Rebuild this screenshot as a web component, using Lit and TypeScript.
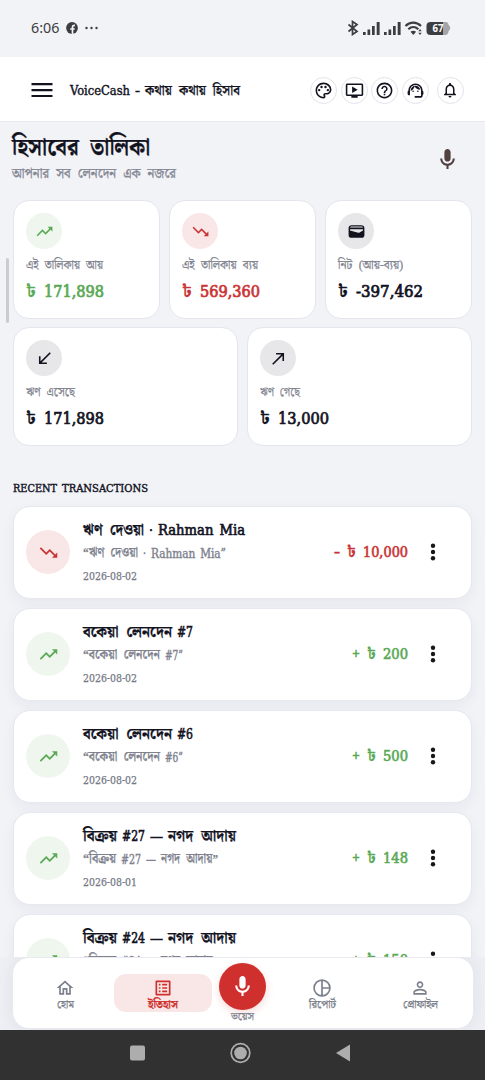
import { LitElement, html, css, svg } from "lit";
import { customElement, property } from "lit/decorators.js";
import { classMap } from "lit/directives/class-map.js";

const ICONS: Record<string, unknown> = {
  menu: svg`<path d="M3 6h18v1.900H3zM3 11.100h18v1.900H3zM3 16.200h18v1.900H3z"/>`,
  up: svg`<path d="M16 6l2.29 2.29-4.88 4.88-4-4L2 16.59 3.41 18l6-6 4 4 6.3-6.29L22 12V6z"/>`,
  down: svg`<path d="M16 18l2.29-2.29-4.88-4.88-4 4L2 7.41 3.41 6l6 6 4-4 6.3 6.29L22 12v6z"/>`,
  received: svg`<path d="M20 5.41L18.59 4 7 15.59V9H5v10h10v-2H8.41z"/>`,
  made: svg`<path d="M9 5v2h6.59L4 18.59 5.41 20 17 8.41V15h2V5z"/>`,
  wallet: svg`<path fill-rule="evenodd" d="M6 4h12a4 4 0 0 1 4 4v8a4 4 0 0 1-4 4H6a4 4 0 0 1-4-4V8a4 4 0 0 1 4-4zM6 5.600c-1.300 0-2.200.600-2.200 1.400h16.400c0-.800-.900-1.400-2.200-1.400zM3.800 9v1.600l10.400 3c.6.2 1.200 0 1.700-.3l4.300-2.700V9z"/>`,
  mic: svg`<path d="M12 14c1.66 0 3-1.34 3-3V5c0-1.660-1.340-3-3-3S9 3.340 9 5v6c0 1.660 1.340 3 3 3zm5-3c0 2.760-2.240 5-5 5s-5-2.240-5-5H5c0 3.530 2.610 6.430 6 6.920V21h2v-3.080c3.390-.490 6-3.390 6-6.920z"/>`,
  palette: svg`<path d="M12 22C6.490 22 2 17.510 2 12S6.490 2 12 2s10 4.040 10 9c0 3.310-2.690 6-6 6h-1.770c-.280 0-.5.220-.5.5 0 .120.050.230.130.330.410.470.640 1.060.640 1.670A2.500 2.500 0 0 1 12 22zm0-18c-4.410 0-8 3.590-8 8s3.590 8 8 8c.280 0 .5-.220.5-.5a.540.540 0 0 0-.140-.350c-.410-.460-.630-1.050-.630-1.650a2.500 2.500 0 0 1 2.500-2.500H16c2.210 0 4-1.790 4-4 0-3.860-3.590-7-8-7z"/><circle cx="6.5" cy="11.5" r="1.5"/><circle cx="9.5" cy="7.5" r="1.5"/><circle cx="14.5" cy="7.5" r="1.5"/><circle cx="17.5" cy="11.5" r="1.5"/>`,
  video: svg`<path d="M21 3H3c-1.110 0-2 .890-2 2v12c0 1.100.890 2 2 2h5v2h8v-2h5c1.100 0 2-.900 2-2V5c0-1.110-.900-2-2-2zm0 14H3V5h18v12zm-5-6l-7 4V7z"/>`,
  help: svg`<path d="M11 18h2v-2h-2v2zm1-16C6.480 2 2 6.480 2 12s4.480 10 10 10 10-4.480 10-10S17.520 2 12 2zm0 18c-4.410 0-8-3.590-8-8s3.590-8 8-8 8 3.590 8 8-3.590 8-8 8zm0-14c-2.210 0-4 1.790-4 4h2c0-1.100.900-2 2-2s2 .900 2 2c0 2-3 1.750-3 5h2c0-2.250 3-2.500 3-5 0-2.210-1.790-4-4-4z"/>`,
  agent: svg`<path d="M21 12.220C21 6.730 16.740 3 12 3c-4.690 0-9 3.650-9 9.280-.600.340-1 .980-1 1.720v2c0 1.100.900 2 2 2h1v-6.100c0-3.870 3.130-7 7-7s7 3.130 7 7V19h-8v2h8c1.100 0 2-.900 2-2v-1.220c.590-.310 1-.920 1-1.640v-2.300c0-.700-.410-1.310-1-1.620z"/><circle cx="9" cy="13" r="1"/><circle cx="15" cy="13" r="1"/><path d="M18 11.030C17.520 8.180 15.040 6 12.050 6c-3.030 0-6.290 2.510-6.030 6.450 2.470-1.010 4.330-3.210 4.860-5.890 1.310 2.630 4 4.440 7.120 4.470z"/>`,
  bell: svg`<path d="M12 22c1.100 0 2-.900 2-2h-4c0 1.100.900 2 2 2zm6-6v-5c0-3.070-1.630-5.640-4.500-6.320V4c0-.830-.670-1.500-1.500-1.500s-1.500.670-1.500 1.500v.680C7.640 5.360 6 7.920 6 11v5l-2 2v1h16v-1l-2-2zm-2 1H8v-6c0-2.480 1.510-4.500 4-4.500s4 2.020 4 4.500v6z"/>`,
  dots: svg`<circle cx="12" cy="5.700" r="2.200"/><circle cx="12" cy="12" r="2.200"/><circle cx="12" cy="18.300" r="2.200"/>`,
  home: svg`<path d="M12 5.690l5 4.500V18h-2v-6H9v6H7v-7.810l5-4.500M12 3L2 12h3v8h6v-6h2v6h6v-8h3L12 3z"/>`,
  list: svg`<path d="M19 5v14H5V5h14m1.100-2H3.900c-.500 0-.900.400-.900.900v16.200c0 .400.400.900.900.900h16.200c.400 0 .900-.500.900-.900V3.900c0-.500-.500-.900-.900-.900zM11 7h6v2h-6V7zm0 4h6v2h-6v-2zm0 4h6v2h-6zM7 7h2v2H7zm0 4h2v2H7zm0 4h2v2H7z"/>`,
  pie: svg`<path fill="none" stroke="currentColor" stroke-width="2" d="M12 2.500a9.500 9.500 0 1 0 0 19a9.500 9.500 0 1 0 0-19zM12 2.500v19M12 12h9.500"/>`,
  person: svg`<path d="M12 5.900a2.100 2.100 0 1 1 0 4.200 2.100 2.100 0 0 1 0-4.200m0 9c2.970 0 6.100 1.460 6.100 2.100v1.100H5.900V17c0-.640 3.130-2.100 6.100-2.100M12 4C9.790 4 8 5.790 8 8s1.790 4 4 4 4-1.790 4-4-1.790-4-4-4zm0 9c-2.670 0-8 1.340-8 4v3h16v-3c0-2.660-5.330-4-8-4z"/>`,
};

@customElement("ui-icon")
class UiIcon extends LitElement {
  @property() name = "";
  static styles = css`
    :host { display: block; width: 20px; height: 20px; flex: none; }
    svg { display: block; width: 100%; height: 100%; fill: currentColor; }
  `;
  render() {
    return html`<svg viewBox="0 0 24 24">${ICONS[this.name]}</svg>`;
  }
}

/** One line of text condensed or widened to an exact measure. */
@customElement("fit-text")
class FitText extends LitElement {
  @property({ type: Number }) w = 0;
  @property() text = "";
  static styles = css`
    :host { display: block; white-space: nowrap; flex: none; }
    span { display: inline-block; transform-origin: 0 50%; white-space: pre; word-spacing: 0.300em; -webkit-text-stroke: 0.250px currentColor; }
    .latin {
      font-family: "DejaVu Serif Condensed", "DejaVu Serif", serif; font-stretch: condensed;
      font-size: 0.890em; font-weight: 400; word-spacing: 0.120em; vertical-align: top; padding-top: var(--latin-drop, 0);
      -webkit-text-stroke: var(--latin-stroke, 0.400px) currentColor;
    }
    .sign { font-size: 0.700em; }
  `;
  render() {
    const latin = !/[\u0980-\u09ff]/.test(this.text);
    return html`<span class=${classMap({ latin, sign: this.text === "+" })}>${this.text}</span>`;
  }
  updated() {
    const span = this.renderRoot.querySelector("span") as HTMLElement;
    span.style.transform = "";
    const natural = span.getBoundingClientRect().width;
    this.style.width = `${this.w}px`;
    if (natural > 0) span.style.transform = `scaleX(${this.w / natural})`;
  }
}

const t = (text: string, w: number, cls = "") =>
  html`<fit-text class=${cls} .text=${text} .w=${w}></fit-text>`;

interface Stat { icon: string; tone: string; label: string; lw: number; value: string; vw: number; }
const STATS_TOP: Stat[] = [
  { icon: "up", tone: "green", label: "এই তালিকায় আয়", lw: 77, value: "171,898", vw: 60 },
  { icon: "down", tone: "red", label: "এই তালিকায় ব্যয়", lw: 76, value: "569,360", vw: 60 },
  { icon: "wallet", tone: "ink", label: "নিট (আয়-ব্যয়)", lw: 65, value: "-397,462", vw: 67 },
];
const STATS_BOTTOM: Stat[] = [
  { icon: "received", tone: "ink", label: "ঋণ এসেছে", lw: 49, value: "171,898", vw: 60 },
  { icon: "made", tone: "ink", label: "ঋণ গেছে", lw: 40, value: "13,000", vw: 51 },
];

interface Tx { up: boolean; title: [string, number][]; note: [string, number][]; date: string; amount: string; aw: number; }
const TXS: Tx[] = [
  { up: false, title: [["ঋণ দেওয়া", 61], ["·", 4], ["Rahman Mia", 87]], note: [["“ঋণ দেওয়া", 55], ["·", 3], ["Rahman Mia”", 75]], date: "2026-08-02", amount: "10,000", aw: 45 },
  { up: true, title: [["বকেয়া লেনদেন", 89], ["#7", 16]], note: [["“বকেয়া লেনদেন", 77], ["#7”", 18]], date: "2026-08-02", amount: "200", aw: 25 },
  { up: true, title: [["বকেয়া লেনদেন", 89], ["#6", 16]], note: [["“বকেয়া লেনদেন", 77], ["#6”", 18]], date: "2026-08-02", amount: "500", aw: 25 },
  { up: true, title: [["বিক্রয়", 34], ["#27", 23], ["—", 13], ["নগদ আদায়", 68]], note: [["“বিক্রয়", 33], ["#27", 20], ["—", 10], ["নগদ আদায়”", 57]], date: "2026-08-01", amount: "148", aw: 25 },
  { up: true, title: [["বিক্রয়", 34], ["#24", 23], ["—", 13], ["নগদ আদায়", 68]], note: [["“বিক্রয়", 33], ["#24", 20], ["—", 10], ["নগদ আদায়”", 57]], date: "2026-08-01", amount: "150", aw: 25 },
];

@customElement("app-root")
class AppRoot extends LitElement {
  static styles = css`
    * { box-sizing: border-box; }
    :host {
      display: flex; flex-direction: column; width: 485px; height: 1080px; overflow: hidden;
      background: #f2f3f7; color: #12131f;
      font-family: "Liberation Serif", "Noto Serif Bengali", "Noto Sans Bengali", serif;
    }
    .status { height: 57px; flex: none; display: flex; align-items: center; padding: 0 33px 1px 31px; color: #3c3d40; }
    .clock { font: 14.300px/20px "Noto Sans", sans-serif; margin-right: 7px; }
    .status svg { display: block; flex: none; }
    .sys { margin-left: auto; }
    .bar { height: 65px; flex: none; background: #fff; border-bottom: 1px solid #e8e9ee; display: flex; align-items: center; padding: 2px 21.500px 0 28px; }
    .menu { width: 28px; height: 28px; }
    .brand { display: flex; gap: 5px; margin-left: 14px; font-size: 14px; line-height: 20px; font-weight: 600; padding-top: 1px; }
    .tools { display: flex; gap: 3.500px; margin-left: auto; }
    .tool { width: 27px; height: 27px; border: 1px solid #e2e3ea; border-radius: 50%; display: grid; place-items: center; }
    .tool ui-icon { width: 19px; height: 19px; }
    .tool.last { margin-left: 4.500px; }
    .tool.last ui-icon { width: 18px; height: 18px; }
    .main { height: 835px; flex: none; overflow: hidden; position: relative; padding: 0 13px; }
    .thumb { position: absolute; left: 6px; top: 136px; width: 3px; height: 65px; border-radius: 2px; background: #cbccd1; }
    .head { display: flex; justify-content: space-between; height: 78px; padding-top: 9px; margin-left: -1px; }
    .h1 { font-size: 24px; line-height: 33px; font-weight: 700; }
    .sub { font-size: 14px; line-height: 20px; color: #858895; font-weight: 500; }
    .head ui-icon { width: 25px; height: 25px; color: #51423f; margin: 16px 12px 0 0; }
    .grid { display: grid; gap: 9px; }
    .three { grid-template-columns: repeat(3, 1fr); margin-bottom: 8px; }
    .two { grid-template-columns: repeat(2, 1fr); }
    .card { height: 119px; border: 1px solid #e4e5ee; border-radius: 16px; background: #fff; padding: 12px; }
    .disc { width: 36px; height: 36px; border-radius: 50%; display: grid; place-items: center; }
    .disc ui-icon { width: 19px; height: 19px; }
    .disc.green { background: #eef6ee; color: #5aa955; }
    .disc.red { background: #f9e7e8; color: #cb3434; }
    .disc.ink { background: #e7e7e9; }
    .label { font-size: 12px; line-height: 18px; color: #80838f; margin-top: 7px; }
    .value { --latin-stroke: 0.700px; --latin-drop: 1px; display: flex; gap: 8px; font-size: 18px; line-height: 24px; font-weight: 700; margin-top: 5px; }
    .value.green, .amount.green { color: #5aa955; }
    .value.red, .amount.red { color: #cb3434; }
    .recent { --latin-drop: 1px; font-size: 12.500px; line-height: 18px; font-weight: 600; height: 18px; margin: 33px 0 9px; display: flex; gap: 5px; }
    .list { display: flex; flex-direction: column; gap: 9px; }
    .tx { height: 93px; border: 1px solid #e6e7ef; border-radius: 17px; background: #fff; box-shadow: 0 5px 14px rgba(40, 42, 80, 0.05); display: flex; align-items: center; padding: 0 26px 1px 12px; }
    .tx .disc { width: 44px; height: 44px; flex: none; }
    .tx .disc ui-icon { width: 21px; height: 21px; }
    .body { margin-left: 13px; }
    .line { display: flex; gap: 5px; }
    .title { --latin-stroke: 0.600px; font-size: 16px; line-height: 24px; height: 24px; font-weight: 700; margin-top: -1px; }
    .note { --latin-drop: 1px; font-size: 13.500px; line-height: 22px; height: 23px; color: #80838f; font-weight: 600; gap: 5px; }
    .date { --latin-stroke: 0.250px; font-size: 12px; line-height: 18px; color: #757986; margin-top: 3px; }
    .amount { --latin-stroke: 0.600px; margin-left: auto; display: flex; gap: 7px; font-size: 16px; line-height: 22px; font-weight: 700; }
    .more { width: 24px; height: 24px; margin-left: 13px; color: #17171b; }
    .dock { height: 73px; flex: none; padding: 0 11px 1px 12px; background: #eeeff4; }
    .nav { height: 72px; background: #fff; border: 1px solid #e8e9f1; border-radius: 17px; display: flex; align-items: center; padding: 0 3px; box-shadow: 0 0 16px rgba(40, 42, 80, 0.07); }
    .tab { width: 98px; height: 38px; border-radius: 12px; display: flex; flex-direction: column; align-items: center; justify-content: center; color: #7c7f8c; font-size: 11px; line-height: 13px; font-weight: 500; }
    .tab ui-icon { width: 20px; height: 20px; margin-top: 2px; }
    .tab.on { background: #f9e7e7; color: #cf302e; font-weight: 700; }
    .voice { width: 61px; height: 66px; display: flex; flex-direction: column; align-items: center; font-size: 11px; line-height: 14px; color: #7c7f8c; }
    .fab { width: 47px; height: 47px; border-radius: 50%; background: #cf302e; color: #fff; display: grid; place-items: center; box-shadow: 0 3px 8px rgba(207, 48, 46, 0.18); margin: 3px 0 -1px; flex: none; }
    .fab ui-icon { width: 25px; height: 25px; }
    .keys { height: 50px; flex: none; background: #313132; display: flex; justify-content: center; align-items: center; padding: 0 4px 4px 0; }
  `;

  private stat(s: Stat) {
    return html`<div class="card">
      <div class="disc ${s.tone}"><ui-icon name=${s.icon}></ui-icon></div>
      <div class="label">${t(s.label, s.lw)}</div>
      <div class="value ${s.tone}">${t("৳", 10)}${t(s.value, s.vw)}</div>
    </div>`;
  }

  private tx(x: Tx) {
    const tone = classMap({ green: x.up, red: !x.up, amount: true });
    return html`<div class="tx">
      <div class="disc ${x.up ? "green" : "red"}"><ui-icon name=${x.up ? "up" : "down"}></ui-icon></div>
      <div class="body">
        <div class="line title">${x.title.map(([s, w]) => t(s, w))}</div>
        <div class="line note">${x.note.map(([s, w]) => t(s, w))}</div>
        <div class="date">${t(x.date, 54)}</div>
      </div>
      <div class=${tone}>${t(x.up ? "+" : "-", x.up ? 8 : 6)}${t("৳", 9)}${t(x.amount, x.aw)}</div>
      <ui-icon class="more" name="dots"></ui-icon>
    </div>`;
  }

  private tab(icon: string, label: string, w: number, on = false) {
    return html`<div class=${classMap({ tab: true, on })}><ui-icon name=${icon}></ui-icon>${t(label, w)}</div>`;
  }

  render() {
    return html`
      <div class="status">
        <span class="clock">6:06</span>
        <svg width="34" height="14" viewBox="0 0 34 14" fill="#3c3d40">
          <circle cx="6" cy="7" r="5.900"/>
          <path fill="none" stroke="#f2f3f7" stroke-width="1.700" d="M6.500 13V6.200C6.500 4.800 7.200 4.300 9 4.400M4.200 8h4.500"/>
          <circle cx="20.500" cy="7" r="1.200"/><circle cx="25.500" cy="7" r="1.200"/><circle cx="30.500" cy="7" r="1.200"/>
        </svg>
        <svg class="sys" width="106" height="16" viewBox="0 0 106 16" fill="#3c3d40">
          <path fill="none" stroke="#3c3d40" stroke-width="1.700" d="M2.500 4.500l8.500 7-4.500 3V1.500L11 4.500l-8.500 7"/>
          <path d="M17 12h2.700v3H17zM21.500 9.500h2.700V15h-2.700zM26 6h2.700v9H26zM30.700 2h2.900v13h-2.900zM38 12h2.700v3H38zM42.500 9.500h2.700V15h-2.700zM47 6h2.700v9H47zM51.700 2h2.900v13h-2.900z"/>
          <path fill="none" stroke="#3c3d40" stroke-width="2.200" d="M59.500 6c4.500-4.500 11-4.500 15.500 0M62.300 9.300c3-2.800 7-2.800 10 0"/>
          <path d="M64.500 11.800c1.800-1.400 3.800-1.400 5.600 0L67.300 15zM74 9l1.700 2.300h-3.400zM74 15l1.700-2.300h-3.400z"/>
          <path fill="#a4a5a8" d="M93 2h6c3 0 3.500 1.500 3.700 3.300 2 1 2 4.400 0 5.400-.2 2.500-1.200 4.300-3.700 4.300h-6z"/>
          <path d="M84.500 2H97v13H84.500a4 4 0 0 1-4-4V6a4 4 0 0 1 4-4z"/>
          <text x="86.500" y="12.300" font-family="Noto Sans" font-size="10" font-weight="700" fill="#fff" textLength="11" lengthAdjust="spacingAndGlyphs">67</text>
        </svg>
      </div>
      <div class="bar">
        <ui-icon class="menu" name="menu"></ui-icon>
        <div class="brand">${t("VoiceCash", 60)}${t("-", 5)}${t("কথায় কথায় হিসাব", 95)}</div>
        <div class="tools">
          ${["palette", "video", "help", "agent", "bell"].map(
            (n) => html`<div class=${classMap({ tool: true, last: n === "bell" })}><ui-icon name=${n}></ui-icon></div>`
          )}
        </div>
      </div>
      <div class="main">
        <div class="thumb"></div>
        <div class="head">
          <div>
            ${t("হিসাবের তালিকা", 138, "h1")}
            ${t("আপনার সব লেনদেন এক নজরে", 164, "sub")}
          </div>
          <ui-icon name="mic"></ui-icon>
        </div>
        <div class="grid three">${STATS_TOP.map((s) => this.stat(s))}</div>
        <div class="grid two">${STATS_BOTTOM.map((s) => this.stat(s))}</div>
        <div class="recent">${t("RECENT", 44)}${t("TRANSACTIONS", 86)}</div>
        <div class="list">${TXS.map((x) => this.tx(x))}</div>
      </div>
      <div class="dock">
        <div class="nav">
          ${this.tab("home", "হোম", 17)}
          ${this.tab("list", "ইতিহাস", 30, true)}
          <div class="voice"><div class="fab"><ui-icon name="mic"></ui-icon></div>${t("ভয়েস", 23)}</div>
          ${this.tab("pie", "রিপোর্ট", 27)}
          ${this.tab("person", "প্রোফাইল", 35)}
        </div>
      </div>
      <div class="keys">
        <svg width="224" height="24" viewBox="0 0 224 24" fill="#adadae">
          <rect x="1" y="4.500" width="15" height="15" rx="2"/>
          <circle cx="111.500" cy="12" r="9.300" fill="none" stroke="#adadae" stroke-width="1.700"/>
          <circle cx="111.500" cy="12" r="6.300"/>
          <path d="M221 3.500v17l-14-8.500z"/>
        </svg>
      </div>
    `;
  }
}
